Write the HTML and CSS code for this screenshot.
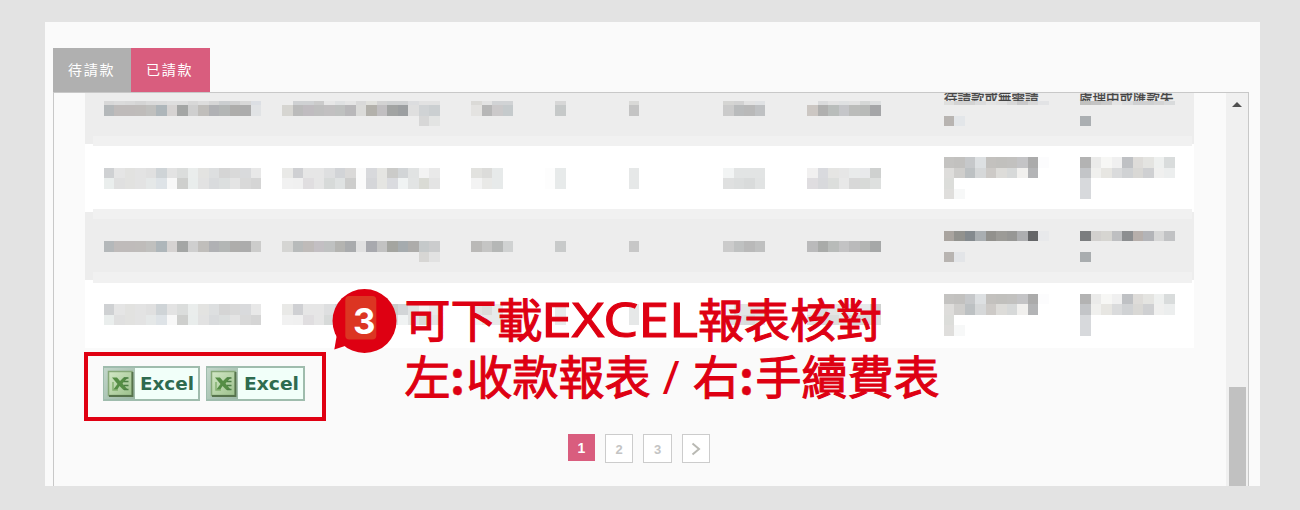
FILE: index.html
```html
<!DOCTYPE html>
<html lang="zh-Hant">
<head>
<meta charset="utf-8">
<title>已請款</title>
<link rel="stylesheet" href="styles.css">
</head>
<body>
<main class="panel">
  <nav class="tabs">
    <span class="tab">待請款</span>
    <span class="tab tab-active">已請款</span>
  </nav>
  <section class="frame">
    <div class="content">
      <div class="table">
        <div class="row row-first">
          <svg class="mosaic" id="row1"></svg>
          <div class="clipped"><span>待請款或無需請</span><span>處理中或匯款失</span></div>
        </div>
        <div class="row row-white"><svg class="mosaic" id="row2"></svg></div>
        <div class="row row-gray"><svg class="mosaic" id="row3"></svg></div>
        <div class="row row-last"><svg class="mosaic" id="row4"></svg></div>
      </div>
      <div class="downloads">
        <svg class="excel" width="97" height="35" viewBox="0 0 97 35">
          <defs>
            <linearGradient id="ic" x1="0" y1="0" x2="1" y2="1"><stop offset="0" stop-color="#d3e8c6"/><stop offset="1" stop-color="#9cc08c"/></linearGradient>
            <linearGradient id="side" x1="0" y1="0" x2="1" y2="1"><stop offset="0" stop-color="#c2d6ca"/><stop offset="1" stop-color="#9bb7a5"/></linearGradient>
            <symbol id="xls" viewBox="0 0 31 31">
              <rect width="31" height="31" fill="url(#side)"/>
              <rect x="4.500" y="3.500" width="23.500" height="24" fill="url(#ic)" stroke="#86a878" stroke-width="1.500"/>
              <path d="M5 28H28.500V4" fill="none" stroke="#56734c" stroke-width="1.800"/>
              <path d="M8 9.500h5l3 3.500 3.500-3.500h4.500l-5.500 6 5.500 6.500h-4.500l-4-4-2.500 4H9l4.500-6z" fill="#558d45"/>
              <path d="M20 10h4.500M20 13.500h4.500M20 17.500h4.500M20 21.500h4.500" stroke="#4c7f45" stroke-width="1.500"/>
              <path d="M9 14v8h5" fill="none" stroke="#85b172" stroke-width="1.500"/>
            </symbol>
          </defs>
          <rect x="1" y="1" width="95" height="33" fill="#f1fff9" stroke="#9fbcad" stroke-width="2"/>
          <use href="#xls" x="1" y="2" width="31" height="31"/>
          <text x="37" y="24" textLength="54" lengthAdjust="spacingAndGlyphs" class="excel-text">Excel</text>
        </svg>
        <svg class="excel" width="99" height="35" viewBox="0 0 99 35">
          <rect x="1" y="1" width="97" height="33" fill="#f1fff9" stroke="#9fbcad" stroke-width="2"/>
          <use href="#xls" x="1" y="2" width="31" height="31"/>
          <text x="38" y="24" textLength="55" lengthAdjust="spacingAndGlyphs" class="excel-text">Excel</text>
        </svg>
      </div>
      <div class="pages">
        <span class="page page-on">1</span>
        <span class="page page-two">2</span>
        <span class="page page-three">3</span>
        <span class="page page-next"><svg width="10" height="14" viewBox="0 0 10 14"><path d="M1.500 1.500L8 7l-6.500 5.500" fill="none" stroke="#b9b9b3" stroke-width="2"/></svg></span>
      </div>
    </div>
    <div class="scrollbar"><i class="arrow"></i><i class="thumb"></i></div>
  </section>
  <svg class="callout" width="620" height="130" viewBox="325 280 620 130">
    <circle cx="364.500" cy="321" r="32" fill="#de0012"/>
    <path d="M337 334L334.300 349.500L348 345z" fill="#de0012"/>
    <rect x="345.300" y="296" width="31" height="43.500" rx="4" fill="#dc3522"/>
    <text x="353" y="333.500" class="num" textLength="22.500" lengthAdjust="spacingAndGlyphs">3</text>
    <g class="caption">
      <text x="404.500" y="337" textLength="138" lengthAdjust="spacing">可下載</text>
      <text x="541" y="337" textLength="157" lengthAdjust="spacingAndGlyphs" class="latin">EXCEL</text>
      <text x="698" y="337" textLength="184">報表核對</text>
      <text x="404.500" y="394">左</text>
      <text x="450" y="394" class="colon">:</text>
      <text x="466.500" y="394" textLength="184">收款報表</text>
      <text x="662.500" y="394" class="slash">/</text>
      <text x="693" y="394">右</text>
      <text x="739" y="394" class="colon">:</text>
      <text x="755.500" y="394" textLength="184">手續費表</text>
    </g>
  </svg>
</main>
<script src="mosaic.js"></script>
</body>
</html>
```
FILE: mosaic.js
```js
// Each run: start column, top offset in the row, height, colours (2 digits = grey level).
const CELL = 10.5, LEFT = 10.5;
const lightMain = [
  [0, 'cfd1d3 e5 e2e2e0 e3 e0 cfd4d7 e3 dbdddc eaedec e3e3e1 dddfe0 d5 d9 d9dadc e8',
      'eaeeed e0 e2e2e0 e3 e5e8e8 dee3e7 f8 cecfcd e9edec e2 d9dbdd dcdfdf e4 d9 d5'],
  [17, 'e9e9e7 cfd0d3 e6 e6 dedfe0 d2d4d7 dad9d8 fb d8d9dc e5e5e2 cbcbc9 d2d5d7 e1e3e3 f3 e9',
       'f1 f0 e0dee0 e6 d7dad9 dfe2e2 cdcdcc fb d5d6d9 e5e5e2 dadbdf f0f3f3 e2e4e4 dadbd5 e4'],
  [35, 'e2e2df dcdcda e7eaea', 'f3 e9e9e7 e7eaea'],
  [42, 'fd e7eaea', 'fd e7eaea'], [50, 'e6e8e8', 'e6e8e8'],
  [59, 'f2f4f4 e2e4e4 e2e4e4 e2e4e4', 'dfe0e0 dcdede d9dbdb e1e3e3'],
  [67, 'f1f0f0 d9dade e5e5e3 e6 e9ebeb e8e9eb cfd1d0', 'dfdde0 d8d9dc dcdedc e8 d8 d8dad8 dee0df']
];
const lightTail = [
  [80, ['c4c3c1 c2c1bf c6c8ca dde0e2 c3c1be c1c0bd c2c1bf c4c4c6 ababab fcfcfd', 'dedddb cfcecc bdc1c3 d6d8d9 cdcac7 dddcd9 d7d9d9 f1f0ee b3b4b6', 'dcddda', 'dfdedc f7f8f8']],
  [93, ['b3b3b3 ebebea f7f7f5 f0 bfc1c4 dedcd9 e4e4e1 eef0ef d9dcdc', 'c3c5c8 f0f0ee e7e6e2 dadbdc d0d2d4 d9d8d5 cfd0d2 f0f0ef eceeee', 'd7d9dc', 'd7d9dc']]
];
function light(top) {
  const out = [];
  lightMain.forEach(([c, a, b]) => out.push([c, top + 10.5, 10.5, a], [c, top + 21, 10.5, b]));
  lightTail.forEach(([c, lines]) => lines.forEach((l, i) => out.push([c, top + i * 10.5, 10.5, l])));
  return out;
}
const main = 'b4b8ba bfbbba bfbbba bfbcba c0c0be aeb6ba d6d3d2 a4a6a5 cf c0bebb b0b1b4 b3b6b5 aeadab acacac ';
const rows = {
  row1: [
    [0, 8, 4, 'd8 db d9 d5 da db de dd d8 dd d6 cbced0 d0 d8 dcdfe4'],
    [18, 8, 4, 'cfd1d3 cfd1d3 cb e7 dfe1e2 e5 d9 e1e1dd d3 cfd1d2 cfd1d2 dcdddf e2 e2'],
    [35, 8, 4, 'dbdad7 e3 d1d3d5 d1d3d5'], [43, 8, 4, 'd7'], [50, 8, 4, 'd9d9d7'],
    [59, 8, 4, 'd5d5d3 d2 e2 e0e2e4'], [68, 8, 4, 'dadbdc e2 dfe1e2 e2 d5d7d6 dddfe0'],
    [80, 8, 4, 'dfdfdd d3 d3 dbdcdd e4 e1 d8 c9c9ca d8 e2e3e5'],
    [93, 8, 4, 'c1c1bf c4 ca e4 dbdcdd cfd0d1 cfd0d1 d4 d9dbdc'],
    [0, 12, 10.5, main + 'e1e3e5'],
    [17, 12, 10.5, 'd6d5d1 bb c0bcc0 bf c2c0c1 bfc1c0 b9b8ba dbdbd9 b3b1ab c1bfc1 a2a4a3 9c9fa1 df d0d3d5 cbcfd1'],
    [30, 22.5, 10.5, 'd7 e3e4e3'], [35, 12, 10.5, 'e4e3e1 b7 cbc9ca c5cacc'],
    [43, 12, 10.5, 'c6c9c9'], [50, 12, 10.5, 'c4'], [59, 12, 10.5, 'cb b9bbbc b9 bfc1c3'],
    [67, 12, 10.5, 'ccc7c3 b0b0af b9bdbb c5c6c9 bbbcba b8bab8 a5a6a8'],
    [80, 22.5, 10.5, 'b8b4b1 e3e6e9'], [93, 22.5, 10.5, 'abafb2']
  ],
  row2: light(11.2),
  row3: [
    [0, 32, 10.5, main + 'cccccb'],
    [17, 32, 10.5, 'd5d5d3 b8bbbb bfbbb9 c3bfc3 bfc1c1 b4b4b1 a9abad e1 a8a9ae c2 a4a5a0 a5abae adacaa c5c9ca cbcccd'],
    [30, 42.5, 10.5, 'd7d6d4 e2'], [35, 32, 10.5, 'bab9b7 c5c5c4 b5b7b6 d0d2d2'],
    [43, 32, 10.5, 'c8caca'], [50, 32, 10.5, 'c7'], [59, 32, 10.5, 'cb bfc1c1 b9 bfc0c0'],
    [67, 32, 10.5, 'bababb a9aba9 b8bbb9 c3c3c4 bababb b3b5b3 a6a8a8'],
    [80, 21.5, 10.5, 'a9a49f 92928e 848a8e a9aeb1 92918d 9c9b97 979795 adaeb0 656668 e8e9eb'],
    [93, 21.5, 10.5, '7b7d7f d2d0ce d6d5d1 bebfc1 8c8e90 b7afab b3b4b8 d7 c1c2c4'],
    [80, 42.5, 10.5, 'b8b4b1 e3e5e8'], [93, 42.5, 10.5, 'a9adaf']
  ],
  row4: light(10.7)
};
for (const [id, runs] of Object.entries(rows)) {
  document.getElementById(id).innerHTML = runs.map(([col, y, h, colours]) =>
    colours.trim().split(' ').map((c, i) =>
      `<rect x="${LEFT + (col + i) * CELL}" y="${y}" width="${CELL}" height="${h}" fill="#${c.length === 2 ? c + c + c : c}"/>`
    ).join('')).join('');
}
```
FILE: styles.css
```css
* { box-sizing: border-box; }
body { margin: 0; height: 510px; padding: 22px 40px 24px 45px; background: #e3e3e3; font-family: "Liberation Sans", "Noto Sans CJK TC", sans-serif; overflow: hidden; }
.panel { position: relative; height: 464px; padding: 26px 11px 0 8px; background: #fafafa; display: flex; flex-direction: column; }
.tabs { display: flex; height: 44px; }
.tab { width: 78px; padding-left: 15px; line-height: 42px; font-size: 14px; letter-spacing: 1.800px; color: #fff; background: #b0b0b0; font-family: "Noto Sans CJK TC", sans-serif; }
.tab-active { width: 79px; background: #d95d7e; }
.frame { flex: 1; display: flex; justify-content: space-between; border: 1px solid #c8c8c8; border-bottom: 0; }
.content { width: 1141px; padding-left: 31px; }
.table { width: 1109px; height: 256px; padding: 0 2px 0 8px; background: linear-gradient(#ededed 51px, #fff 51px 119px, #ededed 119px 187px, #fff 187px 255px, #fafafa 255px); }
.row { display: grid; }
.mosaic { grid-area: 1 / 1; width: 100%; height: 100%; shape-rendering: crispEdges; }
.row-first { height: 53px; background: linear-gradient(#ededed 43px, #f1f1f1 43px); }
.row-white { height: 63px; background: #fff; }
.row-gray { height: 74px; background: linear-gradient(#f1f1f1 10px, #ededed 10px 63px, #f1f1f1 63px); }
.row-last { height: 64px; background: #fff; }
.clipped { grid-area: 1 / 1; display: flex; gap: 40px; height: 8px; padding-left: 851px; overflow: hidden; font: 13.500px/20px "Noto Sans CJK TC", sans-serif; color: #444; -webkit-text-stroke: .3px #444; }
.clipped span { width: 95px; margin-top: -6px; white-space: nowrap; }
.downloads { display: flex; gap: 6px; width: 242px; height: 69px; margin: 3px 0 0 -1px; padding: 10px 0 0 15px; border: 4px solid #e00012; }
.excel-text { font: bold 18px "DejaVu Sans", sans-serif; fill: #2e6b4f; }
.pages { display: flex; align-items: flex-start; margin: 13px 0 0 483px; }
.page { display: flex; align-items: center; justify-content: center; width: 28px; height: 29px; padding-top: 1px; border: 1.500px solid #ccc; background: #fff; color: #c4c4c4; font-size: 13px; font-weight: bold; }
.page-on { width: 27px; height: 27px; border: 0; background: #d95d7e; color: #fff; font-size: 14px; }
.page-two { margin-left: 10px; }
.page-three { width: 29px; margin-left: 10px; }
.page-next { margin-left: 10px; }
.scrollbar { display: flex; flex-direction: column; align-items: center; justify-content: space-between; width: 22px; padding-top: 9px; background: #f0f0f0; }
.arrow { border: 5px solid transparent; border-top: 0; border-bottom: 5px solid #505050; }
.thumb { width: 17px; height: 99px; background: #c1c1c1; }
.callout { position: absolute; left: 280px; top: 258px; }
.num { font: bold 35px Inter, sans-serif; fill: #fff; }
.caption { font: 400 46px "Noto Sans CJK TC", sans-serif; fill: #de0012; stroke: #de0012; stroke-width: 1.100px; }
.colon { font-weight: 700; stroke-width: .5px; }
.latin { font: 400 47px "Noto Sans", sans-serif; stroke-width: 1px; }
.slash { font: 400 46px "Noto Sans", sans-serif; stroke-width: 0; }
```
